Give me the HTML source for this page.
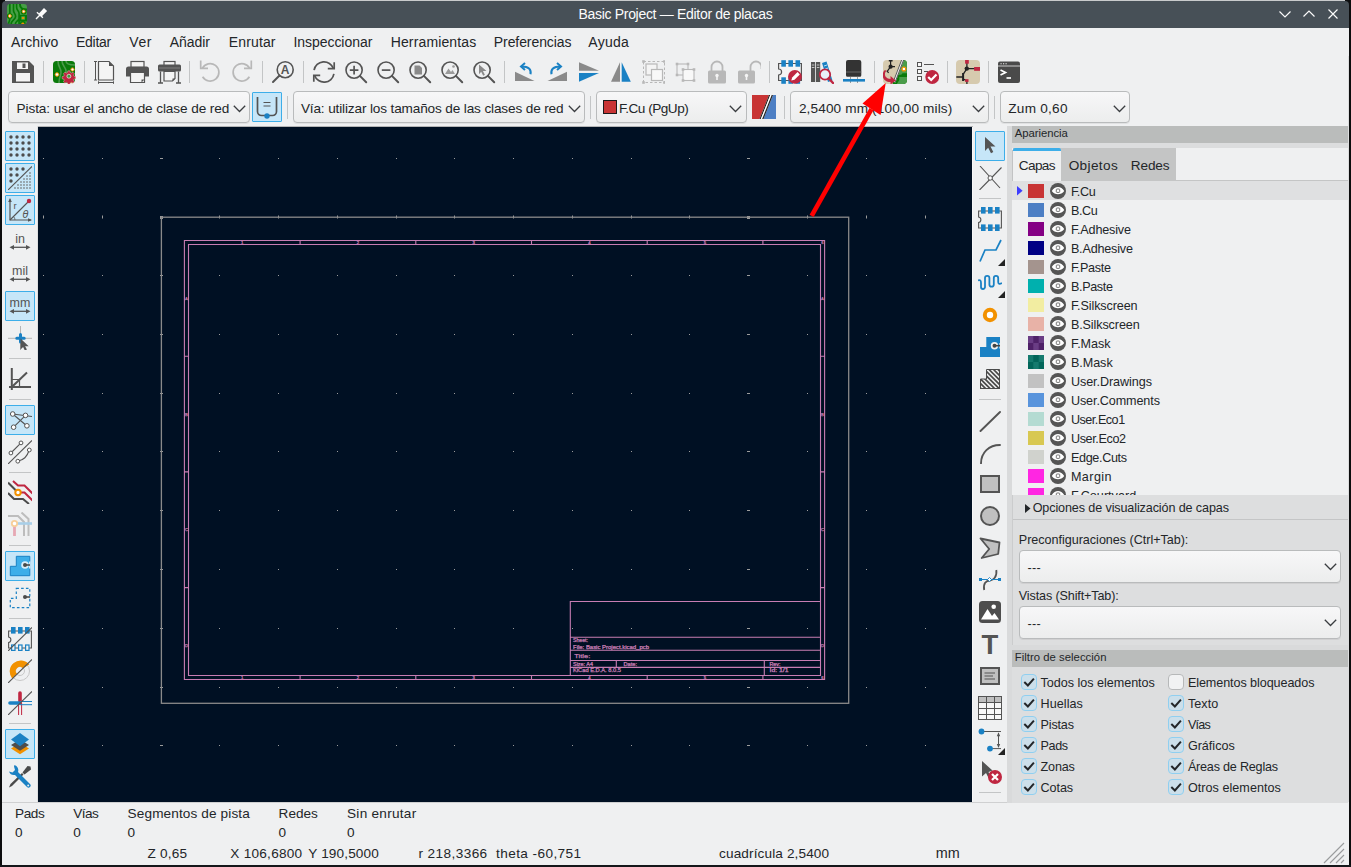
<!DOCTYPE html>
<html><head><meta charset="utf-8"><title>Basic Project — Editor de placas</title>
<style>
*{box-sizing:border-box;margin:0;padding:0}
html,body{width:1351px;height:867px;overflow:hidden;background:#eff0f1;font-family:"Liberation Sans","DejaVu Sans",sans-serif;font-size:13.5px;color:#232629}
#win{position:absolute;left:0;top:0;width:1351px;height:867px;background:#eff0f1;overflow:hidden}
#win div,#win span,#win svg{position:absolute}
#win span{white-space:nowrap;line-height:1}
#title{left:2px;top:1px;width:1347px;height:27px;background:#475057;color:#fcfcfc;border-radius:4px 4px 0 0}
.sep{width:1px;background:#c3c5c6}
.combo{height:32px;border:1px solid #b9bbbc;border-radius:4px;background:linear-gradient(#f7f7f8,#eceded);box-shadow:0 1px 0 rgba(0,0,0,.06)}
.tbtn{width:30px;height:30px;border:1px solid #3daee9;background:#c6e6f8;border-radius:1px}
</style></head><body>
<div id="win">
<div style="left:0;top:0;width:1351px;height:6px;background:#0c0d0e"></div><div style="left:5px;top:0;width:1340px;height:1px;background:#c9cbcc"></div><div id="title"><span style="left:576.5px;top:6.0px;font-size:14px;letter-spacing:-0.31px;color:#fcfcfc;">Basic Project — Editor de placas</span>
<svg style="left:5px;top:3px" width="20" height="20" viewBox="0 0 24 24"><clipPath id="ac"><rect width="24" height="24" rx="4"/></clipPath><g clip-path="url(#ac)"><rect width="24" height="24" fill="#469e46"/><path d="M3.400 0V12M7.800 0V7.500C7.800 11.500 10.300 11 10.300 15C10.300 19 5 19 5 24M11.500 0V4C11.500 8 14.500 7.500 14.500 11.500V24M3.400 17.500C3.400 21 2 21 2 24M10 24C10 20.500 14.500 20 14.500 17" fill="none" stroke="#067a06" stroke-width="2"/><path d="M15.500 0C15.500 5 18 6.500 24 6.500" fill="none" stroke="#067a06" stroke-width="2.400"/><circle cx="20" cy="9" r="3.600" fill="#067a06"/><circle cx="3.400" cy="14.400" r="3.400" fill="#067a06"/><rect x="15" y="13" width="9" height="8" fill="#067a06"/><rect x="17.200" y="14.600" width="4.300" height="4.400" fill="#469e46"/><circle cx="19" cy="24" r="3.600" fill="#067a06"/><circle cx="20" cy="9" r="1.700" fill="#fff" stroke="#f29100" stroke-width="1.200"/><circle cx="3.400" cy="14.400" r="1.700" fill="#fff" stroke="#f29100" stroke-width="1.200"/><ellipse cx="19.300" cy="16.800" rx="1.800" ry="1.300" fill="#f29100"/><ellipse cx="19" cy="23.500" rx="1.800" ry="1.200" fill="#f29100"/></g></svg>
<svg style="left:31px;top:5px" width="16" height="16" viewBox="0 0 16 16"><path d="M6.900 9L3 12.900" stroke="#fcfcfc" stroke-width="1.400"/><path d="M3.900 6.200L9.900 11.800" stroke="#fcfcfc" stroke-width="1.300"/><path d="M5.700 7.800L11 2L14.100 4.900L8.600 10.600Z" fill="#fcfcfc"/></svg>
<svg style="left:1276px;top:7px" width="14" height="12" viewBox="0 0 14 12"><path d="M1.500 3.500l5.500 5.500l5.500-5.500" fill="none" stroke="#fcfcfc" stroke-width="1.150"/></svg>
<svg style="left:1300px;top:7px" width="14" height="12" viewBox="0 0 14 12"><path d="M1.500 8.500l5.500-5.500l5.500 5.500" fill="none" stroke="#fcfcfc" stroke-width="1.150"/></svg>
<svg style="left:1325px;top:7px" width="12" height="12" viewBox="0 0 12 12"><path d="M1.500 1.500l9 9M10.500 1.500l-9 9" fill="none" stroke="#fcfcfc" stroke-width="1.150"/></svg>
</div>
<div id="menu">
<span style="left:11.1px;top:35.0px;font-size:14px;letter-spacing:0.09px;">Archivo</span>
<span style="left:76.0px;top:35.0px;font-size:14px;letter-spacing:-0.28px;">Editar</span>
<span style="left:129.3px;top:35.0px;font-size:14px;letter-spacing:0.59px;">Ver</span>
<span style="left:169.7px;top:35.0px;font-size:14px;letter-spacing:-0.05px;">Añadir</span>
<span style="left:228.8px;top:35.0px;font-size:14px;letter-spacing:0.13px;">Enrutar</span>
<span style="left:293.4px;top:35.0px;font-size:14px;letter-spacing:-0.04px;">Inspeccionar</span>
<span style="left:390.7px;top:35.0px;font-size:14px;letter-spacing:0.14px;">Herramientas</span>
<span style="left:493.8px;top:35.0px;font-size:14px;letter-spacing:-0.08px;">Preferencias</span>
<span style="left:588.3px;top:35.0px;font-size:14px;letter-spacing:0.26px;">Ayuda</span>
</div>
<svg style="left:11px;top:60px" width="24" height="24" viewBox="0 0 24 24"><path d="M1 1h17l5 5v17H1z" fill="#545454"/><rect x="6" y="2.5" width="11" height="6.5" fill="#f4f4f4"/><rect x="11.5" y="3.5" width="3" height="4.5" fill="#545454"/><rect x="5" y="13" width="14" height="8.5" fill="#f4f4f4"/></svg>
<div class="sep" style="left:43px;top:61px;height:22px"></div>
<svg style="left:52px;top:60px" width="24" height="24" viewBox="0 0 24 24"><rect x="1" y="1" width="22" height="22" rx="3.5" fill="#0a7a0a"/><path d="M6 1c0 6 3 7 3 11s-2 5-2 11M10 1c0 5 4 6 4 10v5M14 1c0 3 4 4 9 4" stroke="#4c9a4c" stroke-width="1.6" fill="none"/><circle cx="5" cy="14.5" r="1.8" fill="#fff" stroke="#f29100" stroke-width="1"/><circle cx="20.5" cy="9.5" r="1.6" fill="#fff" stroke="#f29100" stroke-width="1"/><circle cx="20" cy="22" r="1.2" fill="#f29100"/><g transform="translate(16.900 16.200) scale(.82)"><path d="M-1.3-6.5h2.6l.4 1.9 1.5.7 1.7-1 1.8 1.8-1 1.7.7 1.5 1.9.4v2.6l-1.9.4-.7 1.5 1 1.7-1.8 1.8-1.7-1-1.5.7-.4 1.9h-2.6l-.4-1.9-1.5-.7-1.7 1-1.8-1.8 1-1.7-.7-1.5-1.9-.4v-2.6l1.9-.4.7-1.5-1-1.7 1.8-1.8 1.7 1 1.5-.7z" fill="#bf2641" stroke="#e9e0d0" stroke-width=".5"/><circle r="2.4" fill="#3b9a3b" stroke="#fff" stroke-width=".8"/></g></svg>
<div class="sep" style="left:84px;top:61px;height:22px"></div>
<svg style="left:93px;top:60px" width="24" height="24" viewBox="0 0 24 24"><path d="M5.500 1.500h10.500l4.500 4.500v14h-15z" fill="#f4f4f4" stroke="#545454" stroke-width="1.200"/><path d="M16 1.500v4.500h4.500z" fill="#545454"/><path d="M2.500 1.500v18.500M1 1.500h3M1 20h3M5.500 22.500h15M5.500 21.300v2.500M20.500 21.300v2.500" stroke="#545454" stroke-width="1"/></svg>
<svg style="left:125px;top:60px" width="24" height="24" viewBox="0 0 24 24"><rect x="6" y="1.500" width="13" height="6" fill="#f4f4f4" stroke="#545454" stroke-width="1.2"/><path d="M3.500 6.500h18a2.500 2.500 0 0 1 2.500 2.500v7.500h-23v-7.500a2.500 2.500 0 0 1 2.500-2.500z" fill="#545454"/><path d="M5.500 12.500h14v10h-11.500l-2.500-0z" fill="#f4f4f4" stroke="#545454" stroke-width="1.2"/><path d="M16.500 22.500l3-3h-3z" fill="#545454"/></svg>
<svg style="left:157px;top:60px" width="24" height="24" viewBox="0 0 24 24"><rect x="7" y="1.500" width="11" height="5" fill="#f4f4f4" stroke="#545454" stroke-width="1.2"/><rect x="1" y="4.500" width="23" height="7" rx="1.500" fill="#545454"/><path d="M2 8h21" stroke="#8c8c8c" stroke-width=".8"/><path d="M7 11.500h11v7l-2.500 2.500h-8.500z" fill="#f4f4f4" stroke="#545454" stroke-width="1.200"/><path d="M15.500 21v-2.500h2.500z" fill="#545454"/><path d="M3.500 11.500v11.500M21.500 11.500v11.500M1 23h5M19 23h5" stroke="#545454" stroke-width="1.300"/></svg>
<div class="sep" style="left:189px;top:61px;height:22px"></div>
<svg style="left:198px;top:60px" width="24" height="24" viewBox="0 0 24 24"><path d="M4.300 8.500A8.750 8.750 0 1 1 4.600 16.800" fill="none" stroke="#b8b8b8" stroke-width="1.700"/><path d="M2.700 0.400v7.900h7.300" fill="none" stroke="#b8b8b8" stroke-width="1.700"/></svg>
<svg style="left:230px;top:60px" width="24" height="24" viewBox="0 0 24 24"><g transform="translate(24 0) scale(-1 1)"><path d="M4.300 8.500A8.750 8.750 0 1 1 4.600 16.800" fill="none" stroke="#b8b8b8" stroke-width="1.700"/><path d="M2.700 0.400v7.900h7.300" fill="none" stroke="#b8b8b8" stroke-width="1.700"/></g></svg>
<div class="sep" style="left:262px;top:61px;height:22px"></div>
<svg style="left:271px;top:60px" width="24" height="24" viewBox="0 0 24 24"><circle cx="14.200" cy="9.700" r="8" fill="none" stroke="#545454" stroke-width="1.600"/><path d="M8.500 15.500L2 22" stroke="#545454" stroke-width="2" stroke-linecap="round"/><text x="14.200" y="14" font-size="12" font-weight="700" text-anchor="middle" fill="#545454" font-family="Liberation Sans,sans-serif">A</text></svg>
<div class="sep" style="left:303px;top:61px;height:22px"></div>
<svg style="left:312px;top:60px" width="24" height="24" viewBox="0 0 24 24"><path d="M2.100 10.200A10 10 0 0 1 21.400 8.500M21.900 13.800A10 10 0 0 1 2.600 15.500" fill="none" stroke="#545454" stroke-width="1.700"/><path d="M22.200 2.300V8.700H15.800M1.800 21.700V15.300H8.200" fill="none" stroke="#545454" stroke-width="1.700"/></svg>
<svg style="left:344px;top:60px" width="24" height="24" viewBox="0 0 24 24"><circle cx="10.1" cy="10.1" r="8.1" fill="none" stroke="#545454" stroke-width="1.6"/><path d="M15.900 15.900 L22.200 22.200" stroke="#545454" stroke-width="2" stroke-linecap="round"/><path d="M5.800 10.100h8.600M10.100 5.800v8.600" stroke="#545454" stroke-width="1.700"/></svg>
<svg style="left:376px;top:60px" width="24" height="24" viewBox="0 0 24 24"><circle cx="10.1" cy="10.1" r="8.1" fill="none" stroke="#545454" stroke-width="1.6"/><path d="M15.900 15.900 L22.200 22.200" stroke="#545454" stroke-width="2" stroke-linecap="round"/><path d="M5.800 10.100h8.600" stroke="#545454" stroke-width="1.700"/></svg>
<svg style="left:408px;top:60px" width="24" height="24" viewBox="0 0 24 24"><circle cx="10.1" cy="10.1" r="8.1" fill="none" stroke="#545454" stroke-width="1.6"/><path d="M15.900 15.900 L22.200 22.200" stroke="#545454" stroke-width="2" stroke-linecap="round"/><path d="M6.500 5.500h5l2.500 2.500v6.500h-7.500z" fill="#8a8a8a"/></svg>
<svg style="left:440px;top:60px" width="24" height="24" viewBox="0 0 24 24"><circle cx="10.1" cy="10.1" r="8.1" fill="none" stroke="#545454" stroke-width="1.6"/><path d="M15.900 15.900 L22.200 22.200" stroke="#545454" stroke-width="2" stroke-linecap="round"/><path d="M5 14l3.500-5.500l2.500 3.500l1.500-2l2.500 4z" fill="#9a9a9a"/><circle cx="13.500" cy="6.500" r="1.300" fill="#9a9a9a"/></svg>
<svg style="left:472px;top:60px" width="24" height="24" viewBox="0 0 24 24"><circle cx="10.1" cy="10.1" r="8.1" fill="none" stroke="#545454" stroke-width="1.6"/><path d="M15.900 15.900 L22.200 22.200" stroke="#545454" stroke-width="2" stroke-linecap="round"/><path d="M7 4.500l7.500 6.500h-3.600l2 3.800l-1.700.9l-2-3.900l-2.200 2.400z" fill="#8a8a8a"/></svg>
<div class="sep" style="left:504px;top:61px;height:22px"></div>
<svg style="left:513px;top:60px" width="24" height="24" viewBox="0 0 24 24"><path d="M2 21V11.700L21.500 21z" fill="#8a8a8a"/><path d="M17.500 14.300C18.600 9.500 15.500 6.300 8.500 6.400" fill="none" stroke="#1a81c4" stroke-width="2"/><path d="M12 2.900L8 6.400L12 9.900" fill="none" stroke="#1a81c4" stroke-width="2"/></svg>
<svg style="left:545px;top:60px" width="24" height="24" viewBox="0 0 24 24"><g transform="translate(24 0) scale(-1 1)"><path d="M2 21V11.700L21.500 21z" fill="#8a8a8a"/><path d="M17.500 14.300C18.600 9.500 15.500 6.300 8.500 6.400" fill="none" stroke="#1a81c4" stroke-width="2"/><path d="M12 2.900L8 6.400L12 9.900" fill="none" stroke="#1a81c4" stroke-width="2"/></g></svg>
<svg style="left:577px;top:60px" width="24" height="24" viewBox="0 0 24 24"><path d="M2 2.300L22 10.800H2z" fill="#8a8a8a"/><path d="M2 13H22L2 21.800z" fill="#1a81c4"/></svg>
<svg style="left:609px;top:60px" width="24" height="24" viewBox="0 0 24 24"><path d="M11 2.300V21.800H2z" fill="#8a8a8a"/><path d="M12.700 2.300V21.800H21.800z" fill="#1a81c4"/></svg>
<svg style="left:641px;top:60px" width="24" height="24" viewBox="0 0 24 24"><rect x="2.500" y="1.500" width="21" height="21" fill="none" stroke="#b8b8b8" stroke-width="1" stroke-dasharray="2.500 2"/><rect x="1.2" y="0.19999999999999996" width="2.6" height="2.6" fill="#b8b8b8"/><rect x="22.2" y="0.19999999999999996" width="2.6" height="2.6" fill="#b8b8b8"/><rect x="1.2" y="21.2" width="2.6" height="2.6" fill="#b8b8b8"/><rect x="22.2" y="21.2" width="2.6" height="2.6" fill="#b8b8b8"/><rect x="5" y="4" width="11" height="11" fill="#f4f4f4" stroke="#b8b8b8" stroke-width="1.200"/><rect x="10.500" y="9.500" width="11" height="11" fill="#f8f8f8" stroke="#b8b8b8" stroke-width="1.200"/></svg>
<svg style="left:673px;top:60px" width="24" height="24" viewBox="0 0 24 24"><rect x="4" y="4" width="11" height="11" fill="none" stroke="#b8b8b8" stroke-width="1.100"/><rect x="2.7" y="2.7" width="2.6" height="2.6" fill="#b8b8b8"/><rect x="13.7" y="2.7" width="2.6" height="2.6" fill="#b8b8b8"/><rect x="2.7" y="13.7" width="2.6" height="2.6" fill="#b8b8b8"/><rect x="10" y="9.500" width="11" height="11" fill="#f8f8f8" stroke="#b8b8b8" stroke-width="1.100"/><rect x="8.7" y="8.2" width="2.6" height="2.6" fill="#b8b8b8"/><rect x="19.7" y="8.2" width="2.6" height="2.6" fill="#b8b8b8"/><rect x="8.7" y="19.2" width="2.6" height="2.6" fill="#b8b8b8"/><rect x="19.7" y="19.2" width="2.6" height="2.6" fill="#b8b8b8"/></svg>
<svg style="left:705px;top:60px" width="24" height="24" viewBox="0 0 24 24"><path d="M6.500 11v-4a5.500 5.500 0 0 1 11 0v4" fill="none" stroke="#b8b8b8" stroke-width="1.800"/><rect x="3" y="10.500" width="18" height="13" rx="1.500" fill="#b8b8b8"/><circle cx="12" cy="15.500" r="1.700" fill="#f4f4f4"/><rect x="11.200" y="16" width="1.600" height="4" fill="#f4f4f4"/></svg>
<svg style="left:737px;top:60px" width="24" height="24" viewBox="0 0 24 24"><path d="M13.500 11v-4a5.500 5.500 0 0 1 11 0v2" fill="none" stroke="#b8b8b8" stroke-width="1.800"/><rect x="1" y="10.500" width="17" height="13" rx="1.500" fill="#b8b8b8"/><circle cx="9.500" cy="15.500" r="1.700" fill="#f4f4f4"/><rect x="8.700" y="16" width="1.600" height="4" fill="#f4f4f4"/></svg>
<div class="sep" style="left:769px;top:61px;height:22px"></div>
<svg style="left:778px;top:60px" width="24" height="24" viewBox="0 0 24 24"><path d="M0.600 3.500h22.800v17h-22.800v-5.500a3 3 0 0 0 0-6z" fill="#f4f4f4" stroke="#545454" stroke-width="1.200"/><rect x="3.3" y="0.200" width="4.600" height="6.500" fill="#1a81c4"/><rect x="3.3" y="17.300" width="4.600" height="6.500" fill="#1a81c4"/><rect x="10.4" y="0.200" width="4.600" height="6.500" fill="#1a81c4"/><rect x="10.4" y="17.300" width="4.600" height="6.500" fill="#1a81c4"/><rect x="17.5" y="0.200" width="4.600" height="6.500" fill="#1a81c4"/><rect x="17.5" y="17.300" width="4.600" height="6.500" fill="#1a81c4"/><circle cx="16.900" cy="16.800" r="6.900" fill="#bf2641"/><path d="M13.300 20.600l0.900-3.200l5.300-5.300l2.300 2.300l-5.300 5.300z" fill="#fff"/></svg>
<svg style="left:810px;top:60px" width="24" height="24" viewBox="0 0 24 24"><rect x="1" y="2" width="4.200" height="20" fill="#545454"/><rect x="6" y="2" width="4.200" height="20" fill="#545454"/><path d="M1.800 5h2.600M1.800 7.500h2.600M6.800 5h2.600M6.800 7.500h2.600" stroke="#ddd" stroke-width=".8"/><path d="M12 3l4.500-1.500l6 19l-4.500 1.500z" fill="#1a81c4"/><path d="M14 6l3-1M15 9l3-1" stroke="#cfe4f3" stroke-width=".9"/><circle cx="15" cy="14.500" r="5.200" fill="#e8f0f8" stroke="#bf2641" stroke-width="1.800"/><path d="M18.800 18.500l4.200 4.500" stroke="#bf2641" stroke-width="2.400" stroke-linecap="round"/></svg>
<svg style="left:842px;top:60px" width="24" height="24" viewBox="0 0 24 24"><path d="M4 2a2 2 0 0 1 2-2h11.300a2 2 0 0 1 2 2v13.300a1.500 1.500 0 0 1-1.500 1.500h-12.300a1.500 1.500 0 0 1-1.500-1.500z" fill="#333"/><path d="M4 12h15.300" stroke="#6e6e6e" stroke-width=".9"/><path d="M8.500 17v6M15.500 17v6" stroke="#999" stroke-width="1"/><rect x="1" y="19" width="22" height="2.600" fill="#1a81c4"/></svg>
<div class="sep" style="left:874px;top:61px;height:22px"></div>
<svg style="left:883px;top:60px" width="24" height="24" viewBox="0 0 24 24"><clipPath id="uc"><rect width="24" height="24" rx="4"/></clipPath><g clip-path="url(#uc)"><rect width="24" height="24" fill="#d6caae"/><path d="M19.500 0H24V24H9.500L11 19.500Z" fill="#0a7a0a"/><path d="M20.300 0H24V13.300H19.600L18.200 14.700H15Z" fill="#4a9c4a"/><path d="M18.600 17H24V24H13.800L16.300 20V17Z" fill="#4a9c4a"/><circle cx="20.900" cy="9" r="1.900" fill="#fff" stroke="#f29100" stroke-width="1.300"/><path d="M19.600 0L11.200 22" stroke="#f4f4f4" stroke-width="2.600"/><path d="M18.600 0L10.200 22M20.600 0L12.200 22" stroke="#333" stroke-width=".8"/><path d="M7.600 0.500V6.700H12M7.600 6.700L4.200 11.500l1.500 1.200" fill="none" stroke="#222" stroke-width="1.200"/><path d="M5.800 0.800h3.800" stroke="#222" stroke-width="1.500"/><circle cx="7.600" cy="6.700" r="2.100" fill="#222"/><path d="M3.800 12.300c-3.300 2.600-2.300 8 3.700 8.400v-2.800l5.200 4.300l-5.200 4.200v-2.500c-8.500-.3-9.300-8.300-6-11.800z" fill="#bf2641" transform="translate(0 -1.800)"/></g></svg>
<svg style="left:915px;top:60px" width="24" height="24" viewBox="0 0 24 24"><rect x="2.500" y="2.500" width="4" height="4" fill="#f8f8f8" stroke="#545454" stroke-width="1"/><rect x="2.500" y="9.500" width="4" height="4" fill="#f8f8f8" stroke="#545454" stroke-width="1"/><rect x="2.500" y="16.500" width="4" height="4" fill="#f8f8f8" stroke="#545454" stroke-width="1"/><path d="M9 4.500h10M9 11.500h4" stroke="#545454" stroke-width="1"/><circle cx="17.200" cy="17" r="6.900" fill="#bf2641"/><path d="M13.200 17l3 3l5.300-5.500" stroke="#fff" stroke-width="2.200" fill="none"/></svg>
<div class="sep" style="left:947px;top:61px;height:22px"></div>
<svg style="left:956px;top:60px" width="24" height="24" viewBox="0 0 24 24"><rect x="0" y="0" width="24" height="24" rx="4" fill="#d6caae"/><path d="M10.900 3v5.600H19M10.900 8.600L7.100 14.300M7.100 19l3.800 1.600V24M0.300 17H7.100" fill="none" stroke="#222" stroke-width="1.300"/><path d="M7.100 13V21" stroke="#222" stroke-width="2"/><circle cx="10.800" cy="8.600" r="2.200" fill="#222"/><rect x="9.100" y="0" width="3.700" height="3.700" fill="#bf2641"/><rect x="18.100" y="7" width="5.900" height="3.800" fill="#bf2641"/><rect x="9.100" y="19.200" width="3.400" height="2.700" fill="#bf2641"/></svg>
<div class="sep" style="left:988px;top:61px;height:22px"></div>
<svg style="left:997px;top:60px" width="24" height="24" viewBox="0 0 24 24"><rect x="1" y="1.500" width="22" height="21.500" rx="2" fill="#4a4a4a"/><path d="M1 6h22" stroke="#f0f0f0" stroke-width=".8"/><path d="M3.500 3.700h1.200M6 3.700h1.200M8.500 3.700h1.200" stroke="#f0f0f0" stroke-width="1.100"/><path d="M3.500 10l5 2.500l-5 2.500" fill="none" stroke="#fff" stroke-width="1.700"/><path d="M9.500 18h4.500" stroke="#fff" stroke-width="1.700"/></svg>
<div class="combo" style="left:8px;top:91px;width:242px;height:32px"></div>
<span style="left:16.6px;top:102.0px;font-size:13.6px;letter-spacing:-0.10px;">Pista: usar el ancho de clase de red</span>
<svg style="left:232.8px;top:104.6px" width="13" height="8" viewBox="0 0 13 8"><path d="M0.800 0.800l5.700 5.700l5.700-5.700" fill="none" stroke="#3a3d40" stroke-width="1.300"/></svg>
<div class="tbtn" style="left:252px;top:92px"><svg style="left:2px;top:2px" width="24" height="24" viewBox="0 0 24 24"><path d="M2.500 2v14.500a4 4 0 0 0 4 4h11a4 4 0 0 0 4-4v-14.500" fill="none" stroke="#545454" stroke-width="1.700"/><path d="M8.500 7.500h7M8.500 11h7" stroke="#545454" stroke-width="1.200"/><circle cx="12" cy="21" r="2.700" fill="#1a81c4"/></svg></div>
<div class="sep" style="left:287px;top:96px;height:23px"></div>
<div class="combo" style="left:293px;top:91px;width:292px;height:32px"></div>
<span style="left:300.9px;top:102.0px;font-size:13.6px;letter-spacing:-0.14px;">Vía: utilizar los tamaños de las clases de red</span>
<svg style="left:567.5px;top:104.6px" width="13" height="8" viewBox="0 0 13 8"><path d="M0.800 0.800l5.700 5.700l5.700-5.700" fill="none" stroke="#3a3d40" stroke-width="1.300"/></svg>
<div class="sep" style="left:590px;top:96px;height:23px"></div>
<div class="combo" style="left:596px;top:91px;width:150.5px;height:32px"></div>
<div style="left:603px;top:100px;width:14px;height:14px;background:#c83434;border:1px solid #1a1a1a"></div>
<span style="left:618.9px;top:102.0px;font-size:13.6px;letter-spacing:-0.49px;">F.Cu (PgUp)</span>
<svg style="left:729.2px;top:104.6px" width="13" height="8" viewBox="0 0 13 8"><path d="M0.800 0.800l5.700 5.700l5.700-5.700" fill="none" stroke="#3a3d40" stroke-width="1.300"/></svg>
<svg style="left:752px;top:95px" width="24" height="24" viewBox="0 0 24 24"><path d="M0 0h17l-9.500 24h-7.500z" fill="#c83434"/><path d="M24 0h-3l-9.500 24h12.500z" fill="#4d7fc4"/><path d="M17 0h1.300l-9.500 24h-1.300z" fill="#222"/><path d="M18.300 0h1.400l-9.500 24h-1.400z" fill="#fff"/><path d="M19.700 0h1.300l-9.500 24h-1.300z" fill="#222"/></svg>
<div class="sep" style="left:784px;top:96px;height:23px"></div>
<div class="combo" style="left:790px;top:91px;width:199px;height:32px"></div>
<span style="left:798.9px;top:102.0px;font-size:13.6px;letter-spacing:0.14px;">2,5400 mm (100,00 mils)</span>
<svg style="left:971.8px;top:104.6px" width="13" height="8" viewBox="0 0 13 8"><path d="M0.800 0.800l5.700 5.700l5.700-5.700" fill="none" stroke="#3a3d40" stroke-width="1.300"/></svg>
<div class="sep" style="left:994px;top:96px;height:23px"></div>
<div class="combo" style="left:1000px;top:91px;width:129.5px;height:32px"></div>
<span style="left:1008.3px;top:102.0px;font-size:13.6px;letter-spacing:0.25px;">Zum 0,60</span>
<svg style="left:1112.7px;top:104.6px" width="13" height="8" viewBox="0 0 13 8"><path d="M0.800 0.800l5.700 5.700l5.700-5.700" fill="none" stroke="#3a3d40" stroke-width="1.300"/></svg>
<div class="tbtn" style="left:5px;top:131px"></div>
<svg style="left:8px;top:134px" width="24" height="24" viewBox="0 0 24 24"><circle cx="3" cy="3" r="1.700" fill="#4d4d4d"/><circle cx="3" cy="9" r="1.700" fill="#4d4d4d"/><circle cx="3" cy="15" r="1.700" fill="#4d4d4d"/><circle cx="3" cy="21" r="1.700" fill="#4d4d4d"/><circle cx="9" cy="3" r="1.700" fill="#4d4d4d"/><circle cx="9" cy="9" r="1.700" fill="#4d4d4d"/><circle cx="9" cy="15" r="1.700" fill="#4d4d4d"/><circle cx="9" cy="21" r="1.700" fill="#4d4d4d"/><circle cx="15" cy="3" r="1.700" fill="#4d4d4d"/><circle cx="15" cy="9" r="1.700" fill="#4d4d4d"/><circle cx="15" cy="15" r="1.700" fill="#4d4d4d"/><circle cx="15" cy="21" r="1.700" fill="#4d4d4d"/><circle cx="21" cy="3" r="1.700" fill="#4d4d4d"/><circle cx="21" cy="9" r="1.700" fill="#4d4d4d"/><circle cx="21" cy="15" r="1.700" fill="#4d4d4d"/><circle cx="21" cy="21" r="1.700" fill="#4d4d4d"/></svg>
<div class="tbtn" style="left:5px;top:163px"></div>
<svg style="left:8px;top:166px" width="24" height="24" viewBox="0 0 24 24"><circle cx="3" cy="3" r="1.700" fill="#4d4d4d"/><circle cx="9" cy="3" r="1.700" fill="#4d4d4d"/><circle cx="15" cy="3" r="1.700" fill="#4d4d4d"/><circle cx="3" cy="9" r="1.700" fill="#4d4d4d"/><circle cx="9" cy="9" r="1.700" fill="#4d4d4d"/><circle cx="3" cy="15" r="1.700" fill="#4d4d4d"/><path d="M0 24L24 0.500" stroke="#545454" stroke-width="1.100"/><rect x="21.3" y="6.3" width="1.400" height="1.400" fill="#6a6a6a"/><rect x="18.3" y="9.3" width="1.400" height="1.400" fill="#6a6a6a"/><rect x="21.3" y="9.3" width="1.400" height="1.400" fill="#6a6a6a"/><rect x="15.3" y="12.3" width="1.400" height="1.400" fill="#6a6a6a"/><rect x="18.3" y="12.3" width="1.400" height="1.400" fill="#6a6a6a"/><rect x="21.3" y="12.3" width="1.400" height="1.400" fill="#6a6a6a"/><rect x="12.3" y="15.3" width="1.400" height="1.400" fill="#6a6a6a"/><rect x="15.3" y="15.3" width="1.400" height="1.400" fill="#6a6a6a"/><rect x="18.3" y="15.3" width="1.400" height="1.400" fill="#6a6a6a"/><rect x="21.3" y="15.3" width="1.400" height="1.400" fill="#6a6a6a"/><rect x="9.3" y="18.3" width="1.400" height="1.400" fill="#6a6a6a"/><rect x="12.3" y="18.3" width="1.400" height="1.400" fill="#6a6a6a"/><rect x="15.3" y="18.3" width="1.400" height="1.400" fill="#6a6a6a"/><rect x="18.3" y="18.3" width="1.400" height="1.400" fill="#6a6a6a"/><rect x="21.3" y="18.3" width="1.400" height="1.400" fill="#6a6a6a"/><rect x="6.3" y="21.3" width="1.400" height="1.400" fill="#6a6a6a"/><rect x="9.3" y="21.3" width="1.400" height="1.400" fill="#6a6a6a"/><rect x="12.3" y="21.3" width="1.400" height="1.400" fill="#6a6a6a"/><rect x="15.3" y="21.3" width="1.400" height="1.400" fill="#6a6a6a"/><rect x="18.3" y="21.3" width="1.400" height="1.400" fill="#6a6a6a"/><rect x="21.3" y="21.3" width="1.400" height="1.400" fill="#6a6a6a"/></svg>
<div class="tbtn" style="left:5px;top:195px"></div>
<svg style="left:8px;top:198px" width="24" height="24" viewBox="0 0 24 24"><path d="M2 1.500v20.500h21" fill="none" stroke="#545454" stroke-width="1.200"/><path d="M2 0l-1.800 4h3.600zM24 22l-4-1.800v3.600z" fill="#545454"/><path d="M2 22L20.500 3.500" stroke="#545454" stroke-width="1.100"/><path d="M5.500 18.500a5 5 0 0 1 1.500 3.500" fill="none" stroke="#545454" stroke-width=".8"/><circle cx="21" cy="3" r="2.200" fill="#bf2641"/><text x="5.500" y="10.500" font-size="9.500" fill="#545454" font-family="Liberation Sans,sans-serif">r</text><text x="14.500" y="19.500" font-size="10" font-style="italic" fill="#545454" font-family="DejaVu Sans,Liberation Sans,sans-serif">θ</text></svg>
<svg style="left:8px;top:230px" width="24" height="24" viewBox="0 0 24 24"><text x="12" y="12.700" font-size="12.500" text-anchor="middle" fill="#545454" font-family="Liberation Sans,sans-serif">in</text><path d="M4.500 17.300h15" stroke="#545454" stroke-width="1.300"/><path d="M1.500 17.300l4.500-2.400v4.800zM22.500 17.300l-4.500-2.400v4.800z" fill="#545454"/></svg>
<svg style="left:8px;top:262px" width="24" height="24" viewBox="0 0 24 24"><text x="12" y="12.700" font-size="12.500" text-anchor="middle" fill="#545454" font-family="Liberation Sans,sans-serif">mil</text><path d="M4.500 17.300h15" stroke="#545454" stroke-width="1.300"/><path d="M1.500 17.300l4.500-2.400v4.800zM22.500 17.300l-4.500-2.400v4.800z" fill="#545454"/></svg>
<div class="tbtn" style="left:5px;top:291px"></div>
<svg style="left:8px;top:294px" width="24" height="24" viewBox="0 0 24 24"><text x="12" y="12.700" font-size="12.500" text-anchor="middle" fill="#545454" font-family="Liberation Sans,sans-serif">mm</text><path d="M4.500 17.300h15" stroke="#545454" stroke-width="1.300"/><path d="M1.500 17.300l4.500-2.400v4.800zM22.500 17.300l-4.500-2.400v4.800z" fill="#545454"/></svg>
<svg style="left:8px;top:326px" width="24" height="24" viewBox="0 0 24 24"><path d="M12.500 0v24M0 12.300h24" stroke="#b5b5b5" stroke-width="1"/><path d="M12.500 8.500v7.500M8.800 12.300h7.400" stroke="#1a81c4" stroke-width="3" stroke-linecap="round"/><path d="M12.500 12.500v11l2.600-2.400l1.800 3.500l2-1l-1.800-3.400h3.600z" fill="#545454"/></svg>
<div style="left:9px;top:358px;width:22px;height:1px;background:#c3c5c6"></div>
<svg style="left:8px;top:366px" width="24" height="24" viewBox="0 0 24 24"><path d="M3.800 2v22M1 21h22" stroke="#545454" stroke-width="2"/><path d="M3.800 21L19 6.500" stroke="#545454" stroke-width="2"/><path d="M4 13.500h7.500v7.500" fill="none" stroke="#545454" stroke-width="1.200"/></svg>
<div style="left:9px;top:399px;width:22px;height:1px;background:#c3c5c6"></div>
<div class="tbtn" style="left:5px;top:405px"></div>
<svg style="left:8px;top:408px" width="24" height="24" viewBox="0 0 24 24"><path d="M4.700 6L19 18M17.500 7.400L5.600 19.200M4.700 6L24 8.500" stroke="#545454" stroke-width="1.100"/><circle cx="4.7" cy="6" r="2.300" fill="#fff" stroke="#545454" stroke-width="1"/><circle cx="17.5" cy="7.4" r="2.300" fill="#fff" stroke="#545454" stroke-width="1"/><circle cx="5.6" cy="19.2" r="2.300" fill="#fff" stroke="#545454" stroke-width="1"/><circle cx="18.9" cy="17.8" r="2.300" fill="#fff" stroke="#545454" stroke-width="1"/></svg>
<svg style="left:8px;top:440px" width="24" height="24" viewBox="0 0 24 24"><path d="M0 24L24 0.500" stroke="#545454" stroke-width="1.100"/><path d="M2.900 13L13 2.900M9.800 21.200c6-1.500 9-4 11.500-11.200" fill="none" stroke="#545454" stroke-width="1.100"/><circle cx="13" cy="2.9" r="1.900" fill="#fff" stroke="#545454" stroke-width="1"/><circle cx="2.9" cy="13" r="1.900" fill="#fff" stroke="#545454" stroke-width="1"/><circle cx="21.3" cy="10" r="1.900" fill="#fff" stroke="#545454" stroke-width="1"/><circle cx="9.8" cy="21.2" r="1.900" fill="#fff" stroke="#545454" stroke-width="1"/></svg>
<div style="left:9px;top:472px;width:22px;height:1px;background:#c3c5c6"></div>
<svg style="left:8px;top:480px" width="24" height="24" viewBox="0 0 24 24"><path d="M5 1l5 4.500h6.500l8 8" fill="none" stroke="#bf2641" stroke-width="2"/><path d="M13 12.500h3.500l8 8" fill="none" stroke="#bf2641" stroke-width="2"/><path d="M0 2.500l8 8" stroke="#4a4a4a" stroke-width="2"/><path d="M0 13l6 6h9l6 5" fill="none" stroke="#4a4a4a" stroke-width="2"/><circle cx="10" cy="12.500" r="2.700" fill="#fff" stroke="#f29100" stroke-width="2"/></svg>
<svg style="left:8px;top:512px" width="24" height="24" viewBox="0 0 24 24"><path d="M0 4h10l6 6v14M13.500 0.500l7 6.500v17" fill="none" stroke="#bdbdbd" stroke-width="2"/><path d="M8 11.500h16" stroke="#a9cfe8" stroke-width="2.600"/><path d="M6.500 14v10" stroke="#e6a8b3" stroke-width="2.800"/><circle cx="6.500" cy="11.500" r="2.700" fill="#fff" stroke="#f7cf99" stroke-width="1.800"/></svg>
<div style="left:9px;top:545px;width:22px;height:1px;background:#c3c5c6"></div>
<div class="tbtn" style="left:5px;top:551px"></div>
<svg style="left:8px;top:554px" width="24" height="24" viewBox="0 0 24 24"><path d="M8.300 2.300h13.500v19.400h-19.500v-9.400h6z" fill="#3daee9" stroke="#1a81c4" stroke-width="1"/><circle cx="17" cy="11" r="3.800" fill="#d9edf9"/><path d="M21.800 7.500v7" stroke="#d9edf9" stroke-width="1.500"/><circle cx="17" cy="11" r="2" fill="#4a4a4a"/><path d="M17 11h5" stroke="#4a4a4a" stroke-width="1.600"/></svg>
<svg style="left:8px;top:586px" width="24" height="24" viewBox="0 0 24 24"><path d="M8.300 2.300h13.500v19.400h-19.500v-9.400h6z" fill="none" stroke="#1a81c4" stroke-width="1.200" stroke-dasharray="2.600 2.200"/><circle cx="17" cy="11" r="2" fill="#4a4a4a"/><path d="M17 11h5" stroke="#4a4a4a" stroke-width="1.600"/></svg>
<div style="left:9px;top:618px;width:22px;height:1px;background:#c3c5c6"></div>
<svg style="left:8px;top:627px" width="24" height="24" viewBox="0 0 24 24"><path d="M0.600 4h22.800v17h-22.800v-5.500a2.800 2.800 0 0 0 0-5.500z" fill="none" stroke="#545454" stroke-width="1.100"/><rect x="3" y="0" width="4.600" height="6.600" fill="#1a81c4"/><rect x="3.6" y="18" width="3.400" height="5.400" fill="#f4f4f4" stroke="#1a81c4" stroke-width="1.200"/><rect x="10" y="0" width="4.600" height="6.600" fill="#1a81c4"/><rect x="10.6" y="18" width="3.400" height="5.400" fill="#f4f4f4" stroke="#1a81c4" stroke-width="1.200"/><rect x="17" y="0" width="4.600" height="6.600" fill="#1a81c4"/><rect x="17.6" y="18" width="3.400" height="5.400" fill="#f4f4f4" stroke="#1a81c4" stroke-width="1.200"/><path d="M0 24L24 0.500" stroke="#545454" stroke-width="1.100"/></svg>
<svg style="left:8px;top:659px" width="24" height="24" viewBox="0 0 24 24"><circle cx="12" cy="12" r="9.500" fill="none" stroke="#c8c8c8" stroke-width="1"/><circle cx="12" cy="12" r="4.500" fill="none" stroke="#c8c8c8" stroke-width="1"/><path d="M21.300 5.500A10 10 0 1 0 4.200 19.500L9 14.800A3.600 3.600 0 1 1 15 9.200z" fill="#f29100"/><path d="M0 24L24 0.500" stroke="#545454" stroke-width="1.100"/></svg>
<svg style="left:8px;top:691px" width="24" height="24" viewBox="0 0 24 24"><path d="M12 2v10" stroke="#bf2641" stroke-width="3.600" stroke-linecap="round"/><path d="M10.600 12v12M13.600 12v12" stroke="#bf2641" stroke-width="1"/><path d="M2 12h9" stroke="#1a81c4" stroke-width="3.600" stroke-linecap="round"/><path d="M12 10.500h12M12 13.700h12" stroke="#1a81c4" stroke-width="1"/><path d="M0 24L24 0.500" stroke="#545454" stroke-width="1.100"/></svg>
<div style="left:9px;top:723px;width:22px;height:1px;background:#c3c5c6"></div>
<div class="tbtn" style="left:5px;top:729px"></div>
<svg style="left:8px;top:732px" width="24" height="24" viewBox="0 0 24 24"><path d="M12 11l9 5.500l-9 5.800l-9-5.800z" fill="#f29100"/><path d="M12 7.500l9 5.500l-9 5.800l-9-5.800z" fill="#4d4d4d"/><path d="M12 1l9 6.500l-9 6.800l-9-6.800z" fill="#1a81c4"/></svg>
<svg style="left:8px;top:764px" width="24" height="24" viewBox="0 0 24 24"><path d="M1 23.500l1.500-3.500L14 9l1.500 1.500L4 22z" fill="#4a4a4a"/><path d="M14.500 8.500l5-6.500l3 0.500l0.500 3l-6.500 5z" fill="#4a4a4a"/><path d="M6 1.500a5.500 5.500 0 0 1 3.500 7l12 12a2 2 0 0 1-3 3l-12-12a5.500 5.500 0 0 1-6-3.500l3.500 1l2.500-2.500l-1-3.500z" fill="#1a81c4" transform="translate(0.500 -0.500)"/><circle cx="20.200" cy="21.500" r="1" fill="#eee"/></svg>
<svg style="left:38px;top:127px;opacity:.999" width="934" height="675" viewBox="0 0 934 675"><rect width="934" height="675" fill="#001023"/><g fill="#9c9c9c"><rect x="5" y="31" width="1" height="1"/><rect x="5" y="88.5" width="1" height="3"/><rect x="5" y="148" width="1" height="1"/><rect x="5" y="207" width="1" height="1"/><rect x="5" y="266" width="1" height="1"/><rect x="5" y="324" width="1" height="1"/><rect x="5" y="383" width="1" height="1"/><rect x="5" y="442" width="1" height="1"/><rect x="5" y="501" width="1" height="1"/><rect x="5" y="560" width="1" height="1"/><rect x="5" y="618" width="1" height="1"/><rect x="64" y="31" width="1" height="1"/><rect x="64" y="88.5" width="1" height="3"/><rect x="64" y="148" width="1" height="1"/><rect x="64" y="207" width="1" height="1"/><rect x="64" y="266" width="1" height="1"/><rect x="64" y="324" width="1" height="1"/><rect x="64" y="383" width="1" height="1"/><rect x="64" y="442" width="1" height="1"/><rect x="64" y="501" width="1" height="1"/><rect x="64" y="560" width="1" height="1"/><rect x="64" y="618" width="1" height="1"/><rect x="122" y="31" width="3" height="1"/><rect x="122" y="89" width="3" height="3"/><rect x="122" y="148" width="3" height="1"/><rect x="122" y="207" width="3" height="1"/><rect x="122" y="266" width="3" height="1"/><rect x="122" y="324" width="3" height="1"/><rect x="122" y="383" width="3" height="1"/><rect x="122" y="442" width="3" height="1"/><rect x="122" y="501" width="3" height="1"/><rect x="122" y="560" width="3" height="1"/><rect x="122" y="618" width="3" height="1"/><rect x="181" y="31" width="1" height="1"/><rect x="181" y="88.5" width="1" height="3"/><rect x="181" y="148" width="1" height="1"/><rect x="181" y="207" width="1" height="1"/><rect x="181" y="266" width="1" height="1"/><rect x="181" y="324" width="1" height="1"/><rect x="181" y="383" width="1" height="1"/><rect x="181" y="442" width="1" height="1"/><rect x="181" y="501" width="1" height="1"/><rect x="181" y="560" width="1" height="1"/><rect x="181" y="618" width="1" height="1"/><rect x="240" y="31" width="1" height="1"/><rect x="240" y="88.5" width="1" height="3"/><rect x="240" y="148" width="1" height="1"/><rect x="240" y="207" width="1" height="1"/><rect x="240" y="266" width="1" height="1"/><rect x="240" y="324" width="1" height="1"/><rect x="240" y="383" width="1" height="1"/><rect x="240" y="442" width="1" height="1"/><rect x="240" y="501" width="1" height="1"/><rect x="240" y="560" width="1" height="1"/><rect x="240" y="618" width="1" height="1"/><rect x="299" y="31" width="1" height="1"/><rect x="299" y="88.5" width="1" height="3"/><rect x="299" y="148" width="1" height="1"/><rect x="299" y="207" width="1" height="1"/><rect x="299" y="266" width="1" height="1"/><rect x="299" y="324" width="1" height="1"/><rect x="299" y="383" width="1" height="1"/><rect x="299" y="442" width="1" height="1"/><rect x="299" y="501" width="1" height="1"/><rect x="299" y="560" width="1" height="1"/><rect x="299" y="618" width="1" height="1"/><rect x="358" y="31" width="1" height="1"/><rect x="358" y="88.5" width="1" height="3"/><rect x="358" y="148" width="1" height="1"/><rect x="358" y="207" width="1" height="1"/><rect x="358" y="266" width="1" height="1"/><rect x="358" y="324" width="1" height="1"/><rect x="358" y="383" width="1" height="1"/><rect x="358" y="442" width="1" height="1"/><rect x="358" y="501" width="1" height="1"/><rect x="358" y="560" width="1" height="1"/><rect x="358" y="618" width="1" height="1"/><rect x="416" y="31" width="1" height="1"/><rect x="416" y="88.5" width="1" height="3"/><rect x="416" y="148" width="1" height="1"/><rect x="416" y="207" width="1" height="1"/><rect x="416" y="266" width="1" height="1"/><rect x="416" y="324" width="1" height="1"/><rect x="416" y="383" width="1" height="1"/><rect x="416" y="442" width="1" height="1"/><rect x="416" y="501" width="1" height="1"/><rect x="416" y="560" width="1" height="1"/><rect x="416" y="618" width="1" height="1"/><rect x="475" y="31" width="1" height="1"/><rect x="475" y="88.5" width="1" height="3"/><rect x="475" y="148" width="1" height="1"/><rect x="475" y="207" width="1" height="1"/><rect x="475" y="266" width="1" height="1"/><rect x="475" y="324" width="1" height="1"/><rect x="475" y="383" width="1" height="1"/><rect x="475" y="442" width="1" height="1"/><rect x="475" y="501" width="1" height="1"/><rect x="475" y="560" width="1" height="1"/><rect x="475" y="618" width="1" height="1"/><rect x="534" y="31" width="1" height="1"/><rect x="534" y="88.5" width="1" height="3"/><rect x="534" y="148" width="1" height="1"/><rect x="534" y="207" width="1" height="1"/><rect x="534" y="266" width="1" height="1"/><rect x="534" y="324" width="1" height="1"/><rect x="534" y="383" width="1" height="1"/><rect x="534" y="442" width="1" height="1"/><rect x="534" y="501" width="1" height="1"/><rect x="534" y="560" width="1" height="1"/><rect x="534" y="618" width="1" height="1"/><rect x="593" y="31" width="1" height="1"/><rect x="593" y="88.5" width="1" height="3"/><rect x="593" y="148" width="1" height="1"/><rect x="593" y="207" width="1" height="1"/><rect x="593" y="266" width="1" height="1"/><rect x="593" y="324" width="1" height="1"/><rect x="593" y="383" width="1" height="1"/><rect x="593" y="442" width="1" height="1"/><rect x="593" y="501" width="1" height="1"/><rect x="593" y="560" width="1" height="1"/><rect x="593" y="618" width="1" height="1"/><rect x="651" y="31" width="1" height="1"/><rect x="651" y="88.5" width="1" height="3"/><rect x="651" y="148" width="1" height="1"/><rect x="651" y="207" width="1" height="1"/><rect x="651" y="266" width="1" height="1"/><rect x="651" y="324" width="1" height="1"/><rect x="651" y="383" width="1" height="1"/><rect x="651" y="442" width="1" height="1"/><rect x="651" y="501" width="1" height="1"/><rect x="651" y="560" width="1" height="1"/><rect x="651" y="618" width="1" height="1"/><rect x="709" y="31" width="3" height="1"/><rect x="709" y="89" width="3" height="3"/><rect x="709" y="148" width="3" height="1"/><rect x="709" y="207" width="3" height="1"/><rect x="709" y="266" width="3" height="1"/><rect x="709" y="324" width="3" height="1"/><rect x="709" y="383" width="3" height="1"/><rect x="709" y="442" width="3" height="1"/><rect x="709" y="501" width="3" height="1"/><rect x="709" y="560" width="3" height="1"/><rect x="709" y="618" width="3" height="1"/><rect x="769" y="31" width="1" height="1"/><rect x="769" y="88.5" width="1" height="3"/><rect x="769" y="148" width="1" height="1"/><rect x="769" y="207" width="1" height="1"/><rect x="769" y="266" width="1" height="1"/><rect x="769" y="324" width="1" height="1"/><rect x="769" y="383" width="1" height="1"/><rect x="769" y="442" width="1" height="1"/><rect x="769" y="501" width="1" height="1"/><rect x="769" y="560" width="1" height="1"/><rect x="769" y="618" width="1" height="1"/><rect x="828" y="31" width="1" height="1"/><rect x="828" y="88.5" width="1" height="3"/><rect x="828" y="148" width="1" height="1"/><rect x="828" y="207" width="1" height="1"/><rect x="828" y="266" width="1" height="1"/><rect x="828" y="324" width="1" height="1"/><rect x="828" y="383" width="1" height="1"/><rect x="828" y="442" width="1" height="1"/><rect x="828" y="501" width="1" height="1"/><rect x="828" y="560" width="1" height="1"/><rect x="828" y="618" width="1" height="1"/><rect x="887" y="31" width="1" height="1"/><rect x="887" y="88.5" width="1" height="3"/><rect x="887" y="148" width="1" height="1"/><rect x="887" y="207" width="1" height="1"/><rect x="887" y="266" width="1" height="1"/><rect x="887" y="324" width="1" height="1"/><rect x="887" y="383" width="1" height="1"/><rect x="887" y="442" width="1" height="1"/><rect x="887" y="501" width="1" height="1"/><rect x="887" y="560" width="1" height="1"/><rect x="887" y="618" width="1" height="1"/></g><rect x="123.4" y="90.2" width="687.3" height="486.1" fill="none" stroke="#8a8a8a" stroke-width="1.300"/><path d="M146.4 113.5H786.6V552.5H146.4ZM150.5 117.5H782.5V548.5H150.5ZM262.1 113.5V117.5M262.1 552.5V548.5M377.8 113.5V117.5M377.8 552.5V548.5M493.5 113.5V117.5M493.5 552.5V548.5M609.2 113.5V117.5M609.2 552.5V548.5M724.9 113.5V117.5M724.9 552.5V548.5M146.4 229.2H150.5M786.6 229.2H782.5M146.4 344.9H150.5M786.6 344.9H782.5M146.4 460.6H150.5M786.6 460.6H782.5M532.3 548.5V474.5H782.5M532.3 510.3H782.5M532.3 523.3H782.5M532.3 533.5H782.5M532.3 540.4H782.5M578.3 533.5V540.4M726.3 533.5V548.5" fill="none" stroke="#c77db3" stroke-width="1.100"/><text x="204.2" y="117.2" font-size="4.200" text-anchor="middle" fill="#c77db3" stroke="#c77db3" stroke-width=".25" font-family="Liberation Sans,sans-serif">1</text><text x="204.2" y="552.2" font-size="4.200" text-anchor="middle" fill="#c77db3" stroke="#c77db3" stroke-width=".25" font-family="Liberation Sans,sans-serif">1</text><text x="320.0" y="117.2" font-size="4.200" text-anchor="middle" fill="#c77db3" stroke="#c77db3" stroke-width=".25" font-family="Liberation Sans,sans-serif">2</text><text x="320.0" y="552.2" font-size="4.200" text-anchor="middle" fill="#c77db3" stroke="#c77db3" stroke-width=".25" font-family="Liberation Sans,sans-serif">2</text><text x="435.6" y="117.2" font-size="4.200" text-anchor="middle" fill="#c77db3" stroke="#c77db3" stroke-width=".25" font-family="Liberation Sans,sans-serif">3</text><text x="435.6" y="552.2" font-size="4.200" text-anchor="middle" fill="#c77db3" stroke="#c77db3" stroke-width=".25" font-family="Liberation Sans,sans-serif">3</text><text x="551.4" y="117.2" font-size="4.200" text-anchor="middle" fill="#c77db3" stroke="#c77db3" stroke-width=".25" font-family="Liberation Sans,sans-serif">4</text><text x="551.4" y="552.2" font-size="4.200" text-anchor="middle" fill="#c77db3" stroke="#c77db3" stroke-width=".25" font-family="Liberation Sans,sans-serif">4</text><text x="667.0" y="117.2" font-size="4.200" text-anchor="middle" fill="#c77db3" stroke="#c77db3" stroke-width=".25" font-family="Liberation Sans,sans-serif">5</text><text x="667.0" y="552.2" font-size="4.200" text-anchor="middle" fill="#c77db3" stroke="#c77db3" stroke-width=".25" font-family="Liberation Sans,sans-serif">5</text><text x="784.3" y="117.2" font-size="4.200" text-anchor="middle" fill="#c77db3" stroke="#c77db3" stroke-width=".25" font-family="Liberation Sans,sans-serif">6</text><text x="784.3" y="552.2" font-size="4.200" text-anchor="middle" fill="#c77db3" stroke="#c77db3" stroke-width=".25" font-family="Liberation Sans,sans-serif">6</text><text x="148.4" y="172.9" font-size="4.200" text-anchor="middle" fill="#c77db3" stroke="#c77db3" stroke-width=".25" font-family="Liberation Sans,sans-serif">A</text><text x="784.5" y="172.9" font-size="4.200" text-anchor="middle" fill="#c77db3" stroke="#c77db3" stroke-width=".25" font-family="Liberation Sans,sans-serif">A</text><text x="148.4" y="288.6" font-size="4.200" text-anchor="middle" fill="#c77db3" stroke="#c77db3" stroke-width=".25" font-family="Liberation Sans,sans-serif">B</text><text x="784.5" y="288.6" font-size="4.200" text-anchor="middle" fill="#c77db3" stroke="#c77db3" stroke-width=".25" font-family="Liberation Sans,sans-serif">B</text><text x="148.4" y="404.2" font-size="4.200" text-anchor="middle" fill="#c77db3" stroke="#c77db3" stroke-width=".25" font-family="Liberation Sans,sans-serif">C</text><text x="784.5" y="404.2" font-size="4.200" text-anchor="middle" fill="#c77db3" stroke="#c77db3" stroke-width=".25" font-family="Liberation Sans,sans-serif">C</text><text x="148.4" y="520.0" font-size="4.200" text-anchor="middle" fill="#c77db3" stroke="#c77db3" stroke-width=".25" font-family="Liberation Sans,sans-serif">D</text><text x="784.5" y="520.0" font-size="4.200" text-anchor="middle" fill="#c77db3" stroke="#c77db3" stroke-width=".25" font-family="Liberation Sans,sans-serif">D</text><text x="535.0" y="515.3" font-size="4.6" textLength="15" lengthAdjust="spacingAndGlyphs" fill="#c77db3" stroke="#c77db3" stroke-width=".25" font-family="Liberation Sans,sans-serif">Sheet:</text><text x="535.0" y="521.6" font-size="4.6" textLength="76" lengthAdjust="spacingAndGlyphs" fill="#c77db3" stroke="#c77db3" stroke-width=".25" font-family="Liberation Sans,sans-serif">File: Basic Project.kicad_pcb</text><text x="536.3" y="531.0" font-size="5.8" textLength="16" lengthAdjust="spacingAndGlyphs" fill="#c77db3" stroke="#c77db3" stroke-width=".25" font-family="Liberation Sans,sans-serif">Title:</text><text x="535.0" y="539.0" font-size="4.6" textLength="20" lengthAdjust="spacingAndGlyphs" fill="#c77db3" stroke="#c77db3" stroke-width=".25" font-family="Liberation Sans,sans-serif">Size: A4</text><text x="585.5" y="539.0" font-size="4.6" textLength="13.5" lengthAdjust="spacingAndGlyphs" fill="#c77db3" stroke="#c77db3" stroke-width=".25" font-family="Liberation Sans,sans-serif">Date:</text><text x="731.5" y="539.0" font-size="4.6" textLength="11" lengthAdjust="spacingAndGlyphs" fill="#c77db3" stroke="#c77db3" stroke-width=".25" font-family="Liberation Sans,sans-serif">Rev:</text><text x="535.0" y="545.0" font-size="4.6" textLength="48" lengthAdjust="spacingAndGlyphs" fill="#c77db3" stroke="#c77db3" stroke-width=".25" font-family="Liberation Sans,sans-serif">KiCad E.D.A. 8.0.5</text><text x="731.5" y="545.0" font-size="4.6" textLength="19" lengthAdjust="spacingAndGlyphs" fill="#c77db3" stroke="#c77db3" stroke-width=".25" font-family="Liberation Sans,sans-serif">Id: 1/1</text></svg>
<div style="left:37px;top:126px;width:936px;height:1px;background:#b4b5b6"></div>
<div style="left:37px;top:126px;width:1px;height:676px;background:#dfe0e1"></div>
<div style="left:972px;top:127px;width:1px;height:675px;background:#f7f7f7"></div>
<div style="left:2px;top:802px;width:1005px;height:1px;background:#cfd0d1"></div>
<div class="tbtn" style="left:975px;top:131px"></div>
<svg style="left:978px;top:134px" width="24" height="24" viewBox="0 0 24 24"><path d="M7 3l10.500 9.500h-5l2.800 5.500l-2.300 1.200l-2.800-5.500l-3.200 3.300z" fill="#545454"/></svg>
<svg style="left:978px;top:166px" width="24" height="24" viewBox="0 0 24 24"><path d="M2 0l20 22M23.500 1.500L1.500 24" stroke="#545454" stroke-width="1.100"/><circle cx="12.200" cy="12" r="2.200" fill="#fff" stroke="#545454" stroke-width="1"/></svg>
<div style="left:979px;top:198px;width:22px;height:1px;background:#c3c5c6"></div>
<svg style="left:978px;top:207px" width="24" height="24" viewBox="0 0 24 24"><path d="M0.600 4h22.800v17h-22.800v-5.500a2.800 2.800 0 0 0 0-5.500z" fill="none" stroke="#545454" stroke-width="1.100"/><rect x="3" y="0" width="4.600" height="6.600" fill="#1a81c4"/><rect x="3" y="17.400" width="4.600" height="6.600" fill="#1a81c4"/><rect x="10" y="0" width="4.600" height="6.600" fill="#1a81c4"/><rect x="10" y="17.400" width="4.600" height="6.600" fill="#1a81c4"/><rect x="17" y="0" width="4.600" height="6.600" fill="#1a81c4"/><rect x="17" y="17.400" width="4.600" height="6.600" fill="#1a81c4"/></svg>
<svg style="left:978px;top:239px" width="24" height="24" viewBox="0 0 24 24"><path d="M2 22.500l5-11.500h11l5-10" fill="none" stroke="#1a81c4" stroke-width="1.700"/></svg>
<svg style="left:998px;top:259px" width="7" height="7" viewBox="0 0 7 7"><path d="M7 0v7h-7z" fill="#222"/></svg>
<svg style="left:978px;top:271px" width="24" height="24" viewBox="0 0 24 24"><path d="M0 9.500c2-1 3 0 3 2.500v4a2 2 0 0 0 4 0v-9a2.200 2.200 0 0 1 4.400 0v6.500a2.200 2.200 0 0 0 4.400 0v-6.500a2.200 2.200 0 0 1 4.400 0v4c0 2 1.500 2.500 3.800 1" fill="none" stroke="#1a81c4" stroke-width="1.800"/></svg>
<svg style="left:998px;top:291px" width="7" height="7" viewBox="0 0 7 7"><path d="M7 0v7h-7z" fill="#222"/></svg>
<svg style="left:978px;top:303px" width="24" height="24" viewBox="0 0 24 24"><circle cx="12" cy="12" r="5.200" fill="#fff" stroke="#f29100" stroke-width="4"/></svg>
<svg style="left:978px;top:335px" width="24" height="24" viewBox="0 0 24 24"><path d="M8.300 2h13.700v20h-20v-10h6.300z" fill="#1a81c4"/><circle cx="16.500" cy="10.700" r="3.700" fill="#f0f0f0"/><path d="M22 8v5.500" stroke="#f0f0f0" stroke-width="1.200"/><circle cx="16.500" cy="10.700" r="2" fill="#444"/><path d="M16.500 10.700h5.500" stroke="#444" stroke-width="1.600"/></svg>
<svg style="left:978px;top:367px" width="24" height="24" viewBox="0 0 24 24"><clipPath id="zc"><path d="M8.300 2h13.700v20h-20v-10h6.300z"/></clipPath><g clip-path="url(#zc)"><path d="M-12 2l24 24M-7.500 2l24 24M-3 2l24 24M1.500 2l24 24M6 2l24 24M10.500 2l24 24M15 2l24 24M19.500 2l24 24M-16.500 2l24 24" stroke="#4a4a4a" stroke-width="1.700"/></g><path d="M8.500 2.500h13v19h-19v-9.500h6z" fill="none" stroke="#4a4a4a" stroke-width="1"/></svg>
<div style="left:979px;top:399px;width:22px;height:1px;background:#c3c5c6"></div>
<svg style="left:978px;top:408px" width="24" height="24" viewBox="0 0 24 24"><path d="M2.500 23L22 4" stroke="#545454" stroke-width="1.900" stroke-linecap="round"/></svg>
<svg style="left:978px;top:440px" width="24" height="24" viewBox="0 0 24 24"><path d="M3 23.500c0-11 8-18.500 19-18.500" fill="none" stroke="#545454" stroke-width="1.900" stroke-linecap="round"/></svg>
<svg style="left:978px;top:472px" width="24" height="24" viewBox="0 0 24 24"><rect x="3" y="4" width="18" height="16" fill="#c0c0c0" stroke="#545454" stroke-width="2"/></svg>
<svg style="left:978px;top:504px" width="24" height="24" viewBox="0 0 24 24"><circle cx="12" cy="12" r="9" fill="#c0c0c0" stroke="#545454" stroke-width="2"/></svg>
<svg style="left:978px;top:536px" width="24" height="24" viewBox="0 0 24 24"><path d="M2.500 2.500l19 4l-1.300 11.500l-16.500 4l7.500-9z" fill="#c0c0c0" stroke="#545454" stroke-width="1.800" stroke-linejoin="round"/></svg>
<svg style="left:978px;top:568px" width="24" height="24" viewBox="0 0 24 24"><path d="M18.300 2c1 7-3 10-6.300 10.500c-4 0-7 3-5.800 9.500" fill="none" stroke="#545454" stroke-width="1.800"/><path d="M1.500 11.500h20.500" stroke="#1a81c4" stroke-width="1"/><rect x="1" y="10" width="3" height="3" fill="#1a81c4"/><rect x="20" y="10" width="3" height="3" fill="#1a81c4"/><path d="M11.500 9.500l2 2l-2 2l-2-2z" fill="#fff" stroke="#1a81c4" stroke-width=".9"/></svg>
<svg style="left:978px;top:600px" width="24" height="24" viewBox="0 0 24 24"><rect x="1" y="1" width="22" height="22" rx="3.500" fill="#4d4d4d"/><path d="M3 19.500l6.500-10.500l4.500 7l2.500-3l4.500 6.500z" fill="#fff"/><circle cx="15.700" cy="6.700" r="2.300" fill="#fff"/></svg>
<svg style="left:978px;top:632px" width="24" height="24" viewBox="0 0 24 24"><text x="12" y="22" font-size="27.500" font-weight="700" text-anchor="middle" fill="#545454" font-family="Liberation Sans,sans-serif">T</text></svg>
<svg style="left:978px;top:664px" width="24" height="24" viewBox="0 0 24 24"><rect x="3" y="4" width="18" height="16" fill="#c0c0c0" stroke="#545454" stroke-width="2"/><path d="M6.500 9h10.500M6.500 12h8.500M6.500 15h10.500" stroke="#545454" stroke-width="1"/></svg>
<svg style="left:978px;top:696px" width="24" height="24" viewBox="0 0 24 24"><rect x="0.500" y="0.500" width="23" height="23" fill="#f8f8f8" stroke="#545454" stroke-width="1"/><rect x="1" y="1" width="22" height="5.500" fill="#c0c0c0"/><path d="M0.500 6.500h23M0.500 12.500h23M0.500 18.500h23M8.500 0.500v23M16.500 0.500v23" stroke="#545454" stroke-width="1"/></svg>
<svg style="left:978px;top:728px" width="24" height="24" viewBox="0 0 24 24"><path d="M3.500 3.500h19.500M12 20.600h11M20.500 5v14" stroke="#545454" stroke-width="1"/><path d="M20.500 4.200l-1.700 4h3.400zM20.500 20l-1.700-4h3.400z" fill="#545454"/><circle cx="3.500" cy="3.500" r="2.900" fill="#1a81c4"/><circle cx="12" cy="20.600" r="2.900" fill="#1a81c4"/></svg>
<svg style="left:998px;top:748px" width="7" height="7" viewBox="0 0 7 7"><path d="M7 0v7h-7z" fill="#222"/></svg>
<svg style="left:978px;top:760px" width="24" height="24" viewBox="0 0 24 24"><path d="M4 1l10.500 9.500l-4 1.500l2.500 5l-2.300 1.200l-2.700-5.200l-4 3.500z" fill="#545454"/><circle cx="17" cy="17" r="7" fill="#bf2641"/><path d="M14 14l6 6M20 14l-6 6" stroke="#fff" stroke-width="2.200"/></svg>
<div style="left:979px;top:792px;width:22px;height:1px;background:#c3c5c6"></div>
<div style="left:1007px;top:126px;width:5px;height:677px;background:#d9dadb"></div>
<div style="left:1012px;top:126px;width:336px;height:17px;background:#babcbb"></div>
<span style="left:1014.7px;top:128.0px;font-size:11.3px;letter-spacing:-0.03px;">Apariencia</span>
<div style="left:1012px;top:143px;width:336px;height:38px;background:#eff0f1"></div>
<div style="left:1012px;top:143px;width:336px;height:5px;background:#dcddde"></div>
<div style="left:1013px;top:148px;width:163px;height:33px;background:#c4c5c5"></div>
<div style="left:1061px;top:180px;width:287px;height:1px;background:#c4c5c5"></div>
<div style="left:1013px;top:148px;width:48px;height:33px;background:#eff0f1;border-top:3px solid #3daee9;border-radius:2px 2px 0 0"></div>
<div style="left:1012px;top:150px;width:1px;height:31px;background:#c2c3c4"></div>
<span style="left:1018.8px;top:159.0px;font-size:13.6px;letter-spacing:-0.62px;">Capas</span>
<span style="left:1068.7px;top:159.0px;font-size:13.6px;letter-spacing:0.36px;">Objetos</span>
<span style="left:1130.8px;top:159.0px;font-size:13.6px;letter-spacing:-0.12px;">Redes</span>
<div style="left:1012px;top:181px;width:336px;height:314px;background:#eff0f1;overflow:hidden">
<div style="left:0;top:0;width:336px;height:18.500px;background:#dfe0e1"></div>
</div>
<div style="left:1012px;top:181px;width:336px;height:314px;overflow:hidden">
<svg style="left:5px;top:5px" width="6" height="10" viewBox="0 0 6 10"><path d="M0 0l5.600 4.700l-5.600 4.700z" fill="#3c3cff"/></svg>
<div style="left:16px;top:3px;width:16px;height:14px;background:#c83434"></div>
<svg style="left:38px;top:2px" width="16" height="16" viewBox="0 0 16 16"><circle cx="8" cy="8" r="8" fill="#555"/><path d="M1.800 8c3-5.200 9.400-5.200 12.400 0c-3 4.300-9.400 4.300-12.400 0z" fill="#fff"/><rect x="6.300" y="6" width="3.400" height="3.400" rx=".7" fill="#fff" stroke="#666" stroke-width=".9"/></svg>
<span style="left:58.9px;top:5.0px;font-size:12.6px;letter-spacing:-0.37px;">F.Cu</span>
<div style="left:16px;top:22px;width:16px;height:14px;background:#4d7fc4"></div>
<svg style="left:38px;top:21px" width="16" height="16" viewBox="0 0 16 16"><circle cx="8" cy="8" r="8" fill="#555"/><path d="M1.800 8c3-5.200 9.400-5.200 12.400 0c-3 4.300-9.400 4.300-12.400 0z" fill="#fff"/><rect x="6.300" y="6" width="3.400" height="3.400" rx=".7" fill="#fff" stroke="#666" stroke-width=".9"/></svg>
<span style="left:58.9px;top:24.0px;font-size:12.6px;letter-spacing:-0.40px;">B.Cu</span>
<div style="left:16px;top:41px;width:16px;height:14px;background:#840084"></div>
<svg style="left:38px;top:40px" width="16" height="16" viewBox="0 0 16 16"><circle cx="8" cy="8" r="8" fill="#555"/><path d="M1.800 8c3-5.200 9.400-5.200 12.400 0c-3 4.300-9.400 4.300-12.400 0z" fill="#fff"/><rect x="6.300" y="6" width="3.400" height="3.400" rx=".7" fill="#fff" stroke="#666" stroke-width=".9"/></svg>
<span style="left:58.9px;top:43.0px;font-size:12.6px;letter-spacing:-0.17px;">F.Adhesive</span>
<div style="left:16px;top:60px;width:16px;height:14px;background:#000084"></div>
<svg style="left:38px;top:59px" width="16" height="16" viewBox="0 0 16 16"><circle cx="8" cy="8" r="8" fill="#555"/><path d="M1.800 8c3-5.200 9.400-5.200 12.400 0c-3 4.300-9.400 4.300-12.400 0z" fill="#fff"/><rect x="6.300" y="6" width="3.400" height="3.400" rx=".7" fill="#fff" stroke="#666" stroke-width=".9"/></svg>
<span style="left:58.9px;top:62.0px;font-size:12.6px;letter-spacing:-0.18px;">B.Adhesive</span>
<div style="left:16px;top:79px;width:16px;height:14px;background:#a4948e"></div>
<svg style="left:38px;top:78px" width="16" height="16" viewBox="0 0 16 16"><circle cx="8" cy="8" r="8" fill="#555"/><path d="M1.800 8c3-5.200 9.400-5.200 12.400 0c-3 4.300-9.400 4.300-12.400 0z" fill="#fff"/><rect x="6.300" y="6" width="3.400" height="3.400" rx=".7" fill="#fff" stroke="#666" stroke-width=".9"/></svg>
<span style="left:58.9px;top:81.0px;font-size:12.6px;letter-spacing:-0.33px;">F.Paste</span>
<div style="left:16px;top:98px;width:16px;height:14px;background:#00b0ae"></div>
<svg style="left:38px;top:97px" width="16" height="16" viewBox="0 0 16 16"><circle cx="8" cy="8" r="8" fill="#555"/><path d="M1.800 8c3-5.200 9.400-5.200 12.400 0c-3 4.300-9.400 4.300-12.400 0z" fill="#fff"/><rect x="6.300" y="6" width="3.400" height="3.400" rx=".7" fill="#fff" stroke="#666" stroke-width=".9"/></svg>
<span style="left:58.9px;top:100.0px;font-size:12.6px;letter-spacing:-0.33px;">B.Paste</span>
<div style="left:16px;top:117px;width:16px;height:14px;background:#f2eda1"></div>
<svg style="left:38px;top:116px" width="16" height="16" viewBox="0 0 16 16"><circle cx="8" cy="8" r="8" fill="#555"/><path d="M1.800 8c3-5.200 9.400-5.200 12.400 0c-3 4.300-9.400 4.300-12.400 0z" fill="#fff"/><rect x="6.300" y="6" width="3.400" height="3.400" rx=".7" fill="#fff" stroke="#666" stroke-width=".9"/></svg>
<span style="left:58.9px;top:119.0px;font-size:12.6px;letter-spacing:-0.11px;">F.Silkscreen</span>
<div style="left:16px;top:136px;width:16px;height:14px;background:#e8b2a7"></div>
<svg style="left:38px;top:135px" width="16" height="16" viewBox="0 0 16 16"><circle cx="8" cy="8" r="8" fill="#555"/><path d="M1.800 8c3-5.200 9.400-5.200 12.400 0c-3 4.300-9.400 4.300-12.400 0z" fill="#fff"/><rect x="6.300" y="6" width="3.400" height="3.400" rx=".7" fill="#fff" stroke="#666" stroke-width=".9"/></svg>
<span style="left:58.9px;top:138.0px;font-size:12.6px;letter-spacing:-0.11px;">B.Silkscreen</span>
<svg style="left:16px;top:155px" width="16" height="14" viewBox="0 0 16 14"><rect width="16" height="14" fill="#6a3d85"/><rect x="5.300" y="0" width="5.400" height="7" fill="#4f2168"/><rect x="0" y="7" width="5.300" height="7" fill="#4f2168"/><rect x="10.700" y="7" width="5.300" height="7" fill="#4f2168"/></svg>
<svg style="left:38px;top:154px" width="16" height="16" viewBox="0 0 16 16"><circle cx="8" cy="8" r="8" fill="#555"/><path d="M1.800 8c3-5.200 9.400-5.200 12.400 0c-3 4.300-9.400 4.300-12.400 0z" fill="#fff"/><rect x="6.300" y="6" width="3.400" height="3.400" rx=".7" fill="#fff" stroke="#666" stroke-width=".9"/></svg>
<span style="left:58.9px;top:157.0px;font-size:12.6px;letter-spacing:-0.04px;">F.Mask</span>
<svg style="left:16px;top:174px" width="16" height="14" viewBox="0 0 16 14"><rect width="16" height="14" fill="#157a6e"/><rect x="5.300" y="0" width="5.400" height="7" fill="#02665a"/><rect x="0" y="7" width="5.300" height="7" fill="#02665a"/><rect x="10.700" y="7" width="5.300" height="7" fill="#02665a"/></svg>
<svg style="left:38px;top:173px" width="16" height="16" viewBox="0 0 16 16"><circle cx="8" cy="8" r="8" fill="#555"/><path d="M1.800 8c3-5.200 9.400-5.200 12.400 0c-3 4.300-9.400 4.300-12.400 0z" fill="#fff"/><rect x="6.300" y="6" width="3.400" height="3.400" rx=".7" fill="#fff" stroke="#666" stroke-width=".9"/></svg>
<span style="left:58.9px;top:176.0px;font-size:12.6px;letter-spacing:-0.04px;">B.Mask</span>
<div style="left:16px;top:193px;width:16px;height:14px;background:#c2c2c2"></div>
<svg style="left:38px;top:192px" width="16" height="16" viewBox="0 0 16 16"><circle cx="8" cy="8" r="8" fill="#555"/><path d="M1.800 8c3-5.200 9.400-5.200 12.400 0c-3 4.300-9.400 4.300-12.400 0z" fill="#fff"/><rect x="6.300" y="6" width="3.400" height="3.400" rx=".7" fill="#fff" stroke="#666" stroke-width=".9"/></svg>
<span style="left:58.9px;top:195.0px;font-size:12.6px;letter-spacing:-0.07px;">User.Drawings</span>
<div style="left:16px;top:212px;width:16px;height:14px;background:#5994dc"></div>
<svg style="left:38px;top:211px" width="16" height="16" viewBox="0 0 16 16"><circle cx="8" cy="8" r="8" fill="#555"/><path d="M1.800 8c3-5.200 9.400-5.200 12.400 0c-3 4.300-9.400 4.300-12.400 0z" fill="#fff"/><rect x="6.300" y="6" width="3.400" height="3.400" rx=".7" fill="#fff" stroke="#666" stroke-width=".9"/></svg>
<span style="left:58.9px;top:214.0px;font-size:12.6px;letter-spacing:-0.10px;">User.Comments</span>
<div style="left:16px;top:231px;width:16px;height:14px;background:#b4dbd2"></div>
<svg style="left:38px;top:230px" width="16" height="16" viewBox="0 0 16 16"><circle cx="8" cy="8" r="8" fill="#555"/><path d="M1.800 8c3-5.200 9.400-5.200 12.400 0c-3 4.300-9.400 4.300-12.400 0z" fill="#fff"/><rect x="6.300" y="6" width="3.400" height="3.400" rx=".7" fill="#fff" stroke="#666" stroke-width=".9"/></svg>
<span style="left:58.9px;top:233.0px;font-size:12.6px;letter-spacing:-0.48px;">User.Eco1</span>
<div style="left:16px;top:250px;width:16px;height:14px;background:#d8c852"></div>
<svg style="left:38px;top:249px" width="16" height="16" viewBox="0 0 16 16"><circle cx="8" cy="8" r="8" fill="#555"/><path d="M1.800 8c3-5.200 9.400-5.200 12.400 0c-3 4.300-9.400 4.300-12.400 0z" fill="#fff"/><rect x="6.300" y="6" width="3.400" height="3.400" rx=".7" fill="#fff" stroke="#666" stroke-width=".9"/></svg>
<span style="left:58.9px;top:252.0px;font-size:12.6px;letter-spacing:-0.36px;">User.Eco2</span>
<div style="left:16px;top:269px;width:16px;height:14px;background:#d0d2cd"></div>
<svg style="left:38px;top:268px" width="16" height="16" viewBox="0 0 16 16"><circle cx="8" cy="8" r="8" fill="#555"/><path d="M1.800 8c3-5.200 9.400-5.200 12.400 0c-3 4.300-9.400 4.300-12.400 0z" fill="#fff"/><rect x="6.300" y="6" width="3.400" height="3.400" rx=".7" fill="#fff" stroke="#666" stroke-width=".9"/></svg>
<span style="left:58.9px;top:271.0px;font-size:12.6px;letter-spacing:-0.33px;">Edge.Cuts</span>
<div style="left:16px;top:288px;width:16px;height:14px;background:#ff26e2"></div>
<svg style="left:38px;top:287px" width="16" height="16" viewBox="0 0 16 16"><circle cx="8" cy="8" r="8" fill="#555"/><path d="M1.800 8c3-5.200 9.400-5.200 12.400 0c-3 4.300-9.400 4.300-12.400 0z" fill="#fff"/><rect x="6.300" y="6" width="3.400" height="3.400" rx=".7" fill="#fff" stroke="#666" stroke-width=".9"/></svg>
<span style="left:58.9px;top:290.0px;font-size:12.6px;letter-spacing:0.44px;">Margin</span>
<div style="left:16px;top:307px;width:16px;height:14px;background:#ff26e2"></div>
<svg style="left:38px;top:306px" width="16" height="16" viewBox="0 0 16 16"><circle cx="8" cy="8" r="8" fill="#555"/><path d="M1.800 8c3-5.200 9.400-5.200 12.400 0c-3 4.300-9.400 4.300-12.400 0z" fill="#fff"/><rect x="6.300" y="6" width="3.400" height="3.400" rx=".7" fill="#fff" stroke="#666" stroke-width=".9"/></svg>
<span style="left:58.9px;top:309.0px;font-size:12.6px;letter-spacing:0.02px;">F.Courtyard</span>
</div>
<div style="left:1012px;top:495px;width:336px;height:308px;background:#dddedf"></div>
<div style="left:1012px;top:519px;width:336px;height:1px;background:#c4c5c6"></div>
<div style="left:1012px;top:495px;width:1px;height:150px;background:#cbcccd"></div>
<svg style="left:1025px;top:504px" width="6" height="9" viewBox="0 0 6 9"><path d="M0 0l5.500 4.500l-5.500 4.500z" fill="#232629"/></svg>
<span style="left:1032.7px;top:502.0px;font-size:12.6px;letter-spacing:-0.12px;">Opciones de visualización de capas</span>
<span style="left:1018.8px;top:534.0px;font-size:12.6px;letter-spacing:-0.03px;">Preconfiguraciones (Ctrl+Tab):</span>
<div class="combo" style="left:1019px;top:550px;width:322px;height:32.5px"></div>
<span style="left:1027.5px;top:562.0px;font-size:12.6px;letter-spacing:0.30px;">---</span>
<svg style="left:1323.5px;top:563px" width="13" height="8" viewBox="0 0 13 8"><path d="M0.800 0.800l5.700 5.700l5.700-5.700" fill="none" stroke="#3a3d40" stroke-width="1.300"/></svg>
<span style="left:1018.8px;top:590.0px;font-size:12.6px;letter-spacing:-0.13px;">Vistas (Shift+Tab):</span>
<div class="combo" style="left:1019px;top:606.2px;width:322px;height:32.5px"></div>
<span style="left:1027.5px;top:618.0px;font-size:12.6px;letter-spacing:0.30px;">---</span>
<svg style="left:1323.5px;top:619.2px" width="13" height="8" viewBox="0 0 13 8"><path d="M0.800 0.800l5.700 5.700l5.700-5.700" fill="none" stroke="#3a3d40" stroke-width="1.300"/></svg>
<div style="left:1007px;top:645px;width:341px;height:5px;background:#d9dadb"></div>
<div style="left:1012px;top:650px;width:336px;height:17px;background:#babcbb"></div>
<span style="left:1014.7px;top:652.0px;font-size:11.3px;letter-spacing:0.04px;">Filtro de selección</span>
<svg style="left:1021px;top:674px" width="16" height="16" viewBox="0 0 16 16"><rect x=".5" y=".5" width="15" height="15" rx="3.500" fill="#ccdfea" stroke="#90cff0" stroke-width="1"/><path d="M3.300 8l3.600 3.500l6-6.800" fill="none" stroke="#232629" stroke-width="2"/></svg>
<span style="left:1040.6px;top:677.0px;font-size:12.6px;letter-spacing:-0.03px;">Todos los elementos</span>
<svg style="left:1021px;top:695px" width="16" height="16" viewBox="0 0 16 16"><rect x=".5" y=".5" width="15" height="15" rx="3.500" fill="#ccdfea" stroke="#90cff0" stroke-width="1"/><path d="M3.300 8l3.600 3.500l6-6.800" fill="none" stroke="#232629" stroke-width="2"/></svg>
<span style="left:1040.6px;top:698.0px;font-size:12.6px;letter-spacing:0.05px;">Huellas</span>
<svg style="left:1021px;top:716px" width="16" height="16" viewBox="0 0 16 16"><rect x=".5" y=".5" width="15" height="15" rx="3.500" fill="#ccdfea" stroke="#90cff0" stroke-width="1"/><path d="M3.300 8l3.600 3.500l6-6.800" fill="none" stroke="#232629" stroke-width="2"/></svg>
<span style="left:1040.6px;top:719.0px;font-size:12.6px;letter-spacing:-0.18px;">Pistas</span>
<svg style="left:1021px;top:737px" width="16" height="16" viewBox="0 0 16 16"><rect x=".5" y=".5" width="15" height="15" rx="3.500" fill="#ccdfea" stroke="#90cff0" stroke-width="1"/><path d="M3.300 8l3.600 3.500l6-6.800" fill="none" stroke="#232629" stroke-width="2"/></svg>
<span style="left:1040.6px;top:740.0px;font-size:12.6px;letter-spacing:-0.41px;">Pads</span>
<svg style="left:1021px;top:758px" width="16" height="16" viewBox="0 0 16 16"><rect x=".5" y=".5" width="15" height="15" rx="3.500" fill="#ccdfea" stroke="#90cff0" stroke-width="1"/><path d="M3.300 8l3.600 3.500l6-6.800" fill="none" stroke="#232629" stroke-width="2"/></svg>
<span style="left:1040.6px;top:761.0px;font-size:12.6px;letter-spacing:-0.18px;">Zonas</span>
<svg style="left:1021px;top:779px" width="16" height="16" viewBox="0 0 16 16"><rect x=".5" y=".5" width="15" height="15" rx="3.500" fill="#ccdfea" stroke="#90cff0" stroke-width="1"/><path d="M3.300 8l3.600 3.500l6-6.800" fill="none" stroke="#232629" stroke-width="2"/></svg>
<span style="left:1040.6px;top:782.0px;font-size:12.6px;letter-spacing:-0.10px;">Cotas</span>
<svg style="left:1168px;top:674px" width="16" height="16" viewBox="0 0 16 16"><rect x=".5" y=".5" width="15" height="15" rx="3.500" fill="#f1f2f3" stroke="#b6b8b9" stroke-width="1"/></svg>
<span style="left:1187.9px;top:677.0px;font-size:12.6px;letter-spacing:-0.08px;">Elementos bloqueados</span>
<svg style="left:1168px;top:695px" width="16" height="16" viewBox="0 0 16 16"><rect x=".5" y=".5" width="15" height="15" rx="3.500" fill="#ccdfea" stroke="#90cff0" stroke-width="1"/><path d="M3.300 8l3.600 3.500l6-6.800" fill="none" stroke="#232629" stroke-width="2"/></svg>
<span style="left:1187.9px;top:698.0px;font-size:12.6px;letter-spacing:0.07px;">Texto</span>
<svg style="left:1168px;top:716px" width="16" height="16" viewBox="0 0 16 16"><rect x=".5" y=".5" width="15" height="15" rx="3.500" fill="#ccdfea" stroke="#90cff0" stroke-width="1"/><path d="M3.300 8l3.600 3.500l6-6.800" fill="none" stroke="#232629" stroke-width="2"/></svg>
<span style="left:1187.9px;top:719.0px;font-size:12.6px;letter-spacing:-0.73px;">Vías</span>
<svg style="left:1168px;top:737px" width="16" height="16" viewBox="0 0 16 16"><rect x=".5" y=".5" width="15" height="15" rx="3.500" fill="#ccdfea" stroke="#90cff0" stroke-width="1"/><path d="M3.300 8l3.600 3.500l6-6.800" fill="none" stroke="#232629" stroke-width="2"/></svg>
<span style="left:1187.9px;top:740.0px;font-size:12.6px;letter-spacing:-0.01px;">Gráficos</span>
<svg style="left:1168px;top:758px" width="16" height="16" viewBox="0 0 16 16"><rect x=".5" y=".5" width="15" height="15" rx="3.500" fill="#ccdfea" stroke="#90cff0" stroke-width="1"/><path d="M3.300 8l3.600 3.500l6-6.800" fill="none" stroke="#232629" stroke-width="2"/></svg>
<span style="left:1187.9px;top:761.0px;font-size:12.6px;letter-spacing:-0.21px;">Áreas de Reglas</span>
<svg style="left:1168px;top:779px" width="16" height="16" viewBox="0 0 16 16"><rect x=".5" y=".5" width="15" height="15" rx="3.500" fill="#ccdfea" stroke="#90cff0" stroke-width="1"/><path d="M3.300 8l3.600 3.500l6-6.800" fill="none" stroke="#232629" stroke-width="2"/></svg>
<span style="left:1187.9px;top:782.0px;font-size:12.6px;letter-spacing:0.04px;">Otros elementos</span>
<span style="left:15.0px;top:807.0px;font-size:13.6px;letter-spacing:-0.39px;">Pads</span>
<span style="left:73.3px;top:807.0px;font-size:13.6px;letter-spacing:-0.57px;">Vías</span>
<span style="left:127.6px;top:807.0px;font-size:13.6px;letter-spacing:0.12px;">Segmentos de pista</span>
<span style="left:278.6px;top:807.0px;font-size:13.6px;letter-spacing:-0.02px;">Redes</span>
<span style="left:347.0px;top:807.0px;font-size:13.6px;letter-spacing:0.27px;">Sin enrutar</span>
<span style="left:15.0px;top:826.0px;font-size:13.6px;letter-spacing:0.64px;">0</span>
<span style="left:73.3px;top:826.0px;font-size:13.6px;letter-spacing:0.64px;">0</span>
<span style="left:127.6px;top:826.0px;font-size:13.6px;letter-spacing:0.64px;">0</span>
<span style="left:278.6px;top:826.0px;font-size:13.6px;letter-spacing:0.64px;">0</span>
<span style="left:347.0px;top:826.0px;font-size:13.6px;letter-spacing:0.64px;">0</span>
<span style="left:147.6px;top:847.0px;font-size:13.6px;letter-spacing:0.21px;">Z 0,65</span>
<span style="left:230.3px;top:847.0px;font-size:13.6px;letter-spacing:0.26px;">X 106,6800</span>
<span style="left:308.3px;top:847.0px;font-size:13.6px;letter-spacing:0.13px;">Y 190,5000</span>
<span style="left:418.4px;top:847.0px;font-size:13.6px;letter-spacing:0.42px;white-space:pre;">r 218,3366  theta -60,751</span>
<span style="left:719.1px;top:847.0px;font-size:13.6px;letter-spacing:0.12px;">cuadrícula 2,5400</span>
<span style="left:935.8px;top:846.0px;font-size:14.4px;">mm</span>
<svg style="left:1323px;top:842px" width="22" height="22" viewBox="0 0 22 22"><path d="M1 21L21 1M7 21L21 7M13 21L21 13M18 21L21 18" stroke="#9a9c9e" stroke-width="1.100"/></svg>
<svg style="left:790px;top:70px" width="120" height="160" viewBox="790 70 120 160"><path d="M811.600 215.900L871.500 109.200" stroke="#ff0000" stroke-width="4.600"/><path d="M885.700 83.100L862.500 103.500L880.600 114.900Z" fill="#ff0000"/></svg>
<div style="left:0;top:1px;width:2px;height:866px;background:#0c0d0e"></div>
<div style="left:1349px;top:1px;width:2px;height:866px;background:#0c0d0e"></div><div style="left:1348px;top:56px;width:1px;height:746px;background:#dcddde"></div>
<div style="left:0;top:865px;width:1351px;height:2px;background:#15171a"></div>
</div>
</body></html>
